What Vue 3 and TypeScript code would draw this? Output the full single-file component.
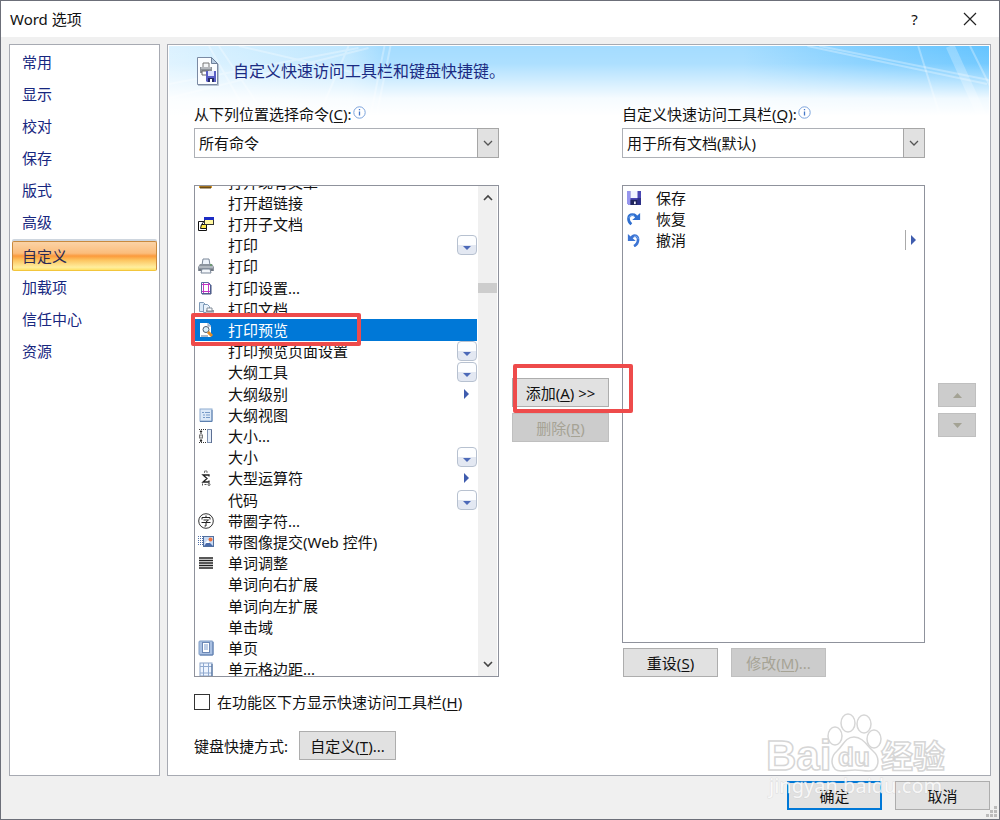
<script setup lang="ts">
import { ref } from 'vue'

type Extra = 'drop' | 'sub' | ''
interface Command {
  label: string
  icon?: string
  extra?: Extra
}

const sections: string[] = ['常用', '显示', '校对', '保存', '版式', '高级', '自定义', '加载项', '信任中心', '资源']
const activeSection = ref('自定义')

const icons: Record<string, string> = {
  folder: '<path d="M1 6h5l1 2h7v6H1z" fill="#d99a2b"/><path d="M2 13.500h11" stroke="#6b4a12" stroke-width="2"/>',
  subdoc:
    '<path d="M.500 5.500h8v9h-8z" fill="#fff" stroke="#111"/><path d="M2.500 12.500l1-4h5v4z" fill="#ffe94a" stroke="#111"/><path d="M4 8l3-4" stroke="#111"/><rect x="6.500" y="1.500" width="9" height="7" fill="#fff7a0" stroke="#333"/><path d="M6 1h10v3H6z" fill="#1c2cc4"/>',
  printer:
    '<path d="M5 1h6l1 6H4z" fill="#eef4fc" stroke="#7b8798"/><path d="M2 6h12l2 3v4H0V9z" fill="#8c949e"/><path d="M1 9h14" stroke="#d5dae0"/><path d="M1 12h14" stroke="#565d66"/><path d="M4 11h8l1 4H3z" fill="#f4f7fb" stroke="#7b8798"/><path d="M12 7h2" stroke="#4f9c49"/>',
  pageSetup:
    '<path d="M3.500 2.500h7l2 2v9h-9z" fill="#fff" stroke="#596aa0"/><path d="M13 5v9H4" fill="none" stroke="#44507c"/><path d="M5.500 3v10M10.500 3v10M4 4.500h8M4 11.500h8" stroke="#c238c4"/>',
  printDoc:
    '<path d="M1.500 1.500h4l2 2v7h-6z" fill="#dbe9f7" stroke="#7f9bb8"/><path d="M5.500 3.500h4l2 2v6h-6z" fill="#eaf3fc" stroke="#7f9bb8"/><path d="M8 9h8v5H8z" fill="#929aa4"/><path d="M9 7h5v3H9z" fill="#fff" stroke="#818b98"/><path d="M8 12h8" stroke="#e6e9ee"/>',
  preview:
    '<path d="M2 1h8l3 3v11H2z" fill="#fff"/><path d="M10 1v3h3" fill="#cbd8eb" stroke="#899cb7"/><circle cx="8" cy="7.500" r="3" fill="#d9effb" stroke="#4d5b6c"/><path d="M10 10l4 4" stroke="#e58d24" stroke-width="3"/><path d="M3 14h7" stroke="#5b708d"/>',
  outline:
    '<rect x="2" y="2" width="12" height="12" fill="#dce9f8" stroke="#8eacd0"/><path d="M14 3v11.500H2" fill="none" stroke="#5c7fae"/><path d="M4 5.500h2M7 5.500h5M5 8h2M8 8h4M5 10.500h2M8 10.500h4" stroke="#789bc8"/>',
  size:
    '<path d="M1 1.500h7M1 14.500h7" stroke="#333" stroke-dasharray="1 1"/><path d="M3 3v3M3 11v3" stroke="#222"/><path d="M1.500 4L3 2l1.500 2zM1.500 12L3 14l1.500-2z" fill="#222"/><rect x="1.500" y="7" width="3" height="3" fill="#ddd" stroke="#777"/><rect x="9.500" y="1.500" width="4" height="13" fill="#e6eef9" stroke="#7d8fae"/><path d="M13.500 2v13" stroke="#5c6f93"/>',
  sigma:
    '<path d="M11 6.500V5H5l4 3.500L5 12h6v-1.500" fill="none" stroke="#222" stroke-width="1.300"/><path d="M6.500 3V1h2.500v2" fill="none" stroke="#777"/><path d="M4.500 13.500v2M6.500 14.500h2" stroke="#555"/><circle cx="11" cy="14.500" r="1" fill="none" stroke="#555"/>',
  circled:
    '<circle cx="8" cy="8" r="7.300" fill="#fff" stroke="#333"/><path d="M8 2.500v2M4 6.500v-2h8v2M5.500 7h5L8 9v4H6.500M3.500 9.500h9" fill="none" stroke="#222"/>',
  image:
    '<path d="M.500 2v9M2.500 2v9M4.500 2v9" stroke="#4f6fa8" stroke-dasharray="1 1"/><rect x="5.500" y="2.500" width="10" height="10" fill="#c8daf4" stroke="#52709f"/><path d="M6 12l4-5 5 5z" fill="#496baa"/><circle cx="12.500" cy="5.500" r="2" fill="#ed7440"/><path d="M7 9l3-3 2 3" fill="#fff"/>',
  justify: '<path d="M1 3h14M1 5.500h14M1 8h14M1 10.500h14M1 13h14" stroke="#222" stroke-width="1.400"/>',
  onePage:
    '<rect x="1" y="1" width="14" height="14" rx="1" fill="#a9c0e2" stroke="#809dc6"/><path d="M15 2v13H2" fill="none" stroke="#5b7bac"/><rect x="4.500" y="2.500" width="7" height="10" fill="#fff" stroke="#6c87b4"/><path d="M6 5h4M6 7h4M6 9h4" stroke="#7d9cce"/>',
  margins:
    '<rect x="2" y="2" width="12" height="13" fill="#eef5ff" stroke="#88a2c8"/><path d="M5.500 2v13M10.500 2v13M2 5.500h12M2 12h12" stroke="#8fa9cf"/><path d="M14 3v12" stroke="#41608f"/>',
  save:
    '<path d="M0 0h16v16H2l-2-2z" fill="#4b48b4"/><path d="M0 0h4v16H2l-2-2z" fill="#9796ee"/><path d="M12 8h4v8h-4z" fill="#2c2f86"/><rect x="4" y="0" width="8" height="8" fill="#f3f5ff"/><rect x="4" y="10" width="8" height="6" fill="#20265c"/><rect x="8" y="12" width="2" height="3" fill="#f4f4ff"/>',
  redo:
    '<path d="M5 14C0 10 1 3 6 3c3 0 5 2 5 5" fill="none" stroke="#2f6fd0" stroke-width="3"/><path d="M6 9h9V1z" fill="#2f6fd0"/><path d="M2 7c1-3 3-4 6-3" fill="none" stroke="#7fb0ee"/>',
  undo:
    '<path d="M8 15c6-3 6-12 1-12C6 3 5 5 4 7" fill="none" stroke="#3c74d4" stroke-width="3"/><path d="M10 9H1V1z" fill="#3c74d4"/><path d="M13 7c-1-3-3-4-5-3" fill="none" stroke="#8cb9f0"/>'
}

const commands: Command[] = [
  { label: '打开现有文章', icon: 'folder' },
  { label: '打开超链接' },
  { label: '打开子文档', icon: 'subdoc' },
  { label: '打印', extra: 'drop' },
  { label: '打印', icon: 'printer' },
  { label: '打印设置...', icon: 'pageSetup' },
  { label: '打印文档', icon: 'printDoc' },
  { label: '打印预览', icon: 'preview' },
  { label: '打印预览页面设置', extra: 'drop' },
  { label: '大纲工具', extra: 'drop' },
  { label: '大纲级别', extra: 'sub' },
  { label: '大纲视图', icon: 'outline' },
  { label: '大小...', icon: 'size' },
  { label: '大小', extra: 'drop' },
  { label: '大型运算符', icon: 'sigma', extra: 'sub' },
  { label: '代码', extra: 'drop' },
  { label: '带圈字符...', icon: 'circled' },
  { label: '带图像提交(Web 控件)', icon: 'image' },
  { label: '单词调整', icon: 'justify' },
  { label: '单词向右扩展' },
  { label: '单词向左扩展' },
  { label: '单击域' },
  { label: '单页', icon: 'onePage' },
  { label: '单元格边距...', icon: 'margins' }
]
const selected = ref(7)

const toolbar: Command[] = [
  { label: '保存', icon: 'save' },
  { label: '恢复', icon: 'redo' },
  { label: '撤消', icon: 'undo', extra: 'sub' }
]
const below = ref(false)
</script>

<template>
  <div class="dialog">
    <header class="titlebar">
      <h1>Word 选项</h1>
      <button class="caption" aria-label="帮助">?</button>
      <button class="caption" aria-label="关闭">
        <svg width="14" height="14" viewBox="0 0 14 14"><path d="M1 1l12 12M13 1L1 13" stroke="#222" stroke-width="1.200" /></svg>
      </button>
    </header>

    <div class="body">
      <nav class="sidebar">
        <button
          v-for="s in sections"
          :key="s"
          class="nav-item"
          :class="{ active: s === activeSection }"
          @click="activeSection = s"
        >
          {{ s }}
        </button>
      </nav>

      <main class="panel">
        <div class="banner">
          <svg class="banner-art" viewBox="0 0 822 70" preserveAspectRatio="none" aria-hidden="true">
            <defs>
              <linearGradient id="sky" x1="0" x2="1" y1="0" y2="0">
                <stop offset="0" stop-color="#dcf2ff" />
                <stop offset="0.220" stop-color="#bfe7ff" />
                <stop offset="0.260" stop-color="#a4dcff" />
                <stop offset="0.700" stop-color="#a4dcff" />
                <stop offset="0.850" stop-color="#80ceff" />
                <stop offset="1" stop-color="#64c4ff" />
              </linearGradient>
              <linearGradient id="fade" x1="0" x2="0" y1="0" y2="1">
                <stop offset="0" stop-color="#fff" stop-opacity="0" />
                <stop offset="0.250" stop-color="#fff" stop-opacity="0.100" />
                <stop offset="0.750" stop-color="#fff" stop-opacity="0.900" />
                <stop offset="1" stop-color="#fff" />
              </linearGradient>
            </defs>
            <rect width="822" height="70" fill="url(#sky)" />
            <g stroke="#fff" fill="none" stroke-opacity="0.300">
              <path d="M40 0l34 60M50 0l40 60M0 38l190-36M0 52l200-50M70 0l130 30M180 0l-30 70M216 0l-14 70M222 0l-14 70" stroke-width="2" />
              <path d="M640 0l180 38M652 0l170 34" stroke-width="2" />
              <path d="M751 0l22 70M803 0l20 40" stroke-width="2" />
              <path d="M783 0l32 70" stroke-width="9" stroke-opacity="0.250" />
            </g>
            <rect width="822" height="70" fill="url(#fade)" />
          </svg>
          <div class="banner-content">
            <svg width="24" height="30" viewBox="0 0 24 30">
              <path d="M1.500 1.500h14l6 6v21h-20z" fill="#fbfdff" stroke="#7b8aa3" />
              <path d="M22.500 8v21.500H2" fill="none" stroke="#b7c3d2" />
              <path d="M15.500 1.500v6h6z" fill="#b9cde3" stroke="#6f819b" />
              <path d="M7 11V7h6v4" fill="#f4f6f8" stroke="#777" />
              <path d="M4 11h12v6H4z" fill="#8d9299" /><path d="M5 12h10" stroke="#dadde1" />
              <path d="M6 15h7v4H6z" fill="#fff" stroke="#666" />
              <path d="M10 15h10v11H11l-1-1z" fill="#5a5fc5" /><path d="M12 15h6v5h-6z" fill="#dfe4ff" /><path d="M12 22h6v4h-6z" fill="#252b68" /><path d="M14 23h2v3h-2z" fill="#fff" />
            </svg>
            <h2>自定义快速访问工具栏和键盘快捷键。</h2>
          </div>
        </div>

        <div class="columns">
          <div class="label from-label">
            <label for="from">从下列位置选择命令(<u>C</u>):</label>
            <svg class="info" width="13" height="13" viewBox="0 0 13 13"><circle cx="6.500" cy="6.500" r="5.700" fill="#fff" stroke="#7ba3dc" /><path d="M6.500 5.500v4M6.500 3v1.300" stroke="#4678c8" stroke-width="1.300" /></svg>
          </div>
          <div class="combo from-combo">
            <select id="from"><option>所有命令</option></select>
            <span class="combo-arrow"><svg width="10" height="7" viewBox="0 0 10 7"><path d="M1 1l4 4 4-4" fill="none" stroke="#555" stroke-width="1.300" /></svg></span>
          </div>

          <div class="list-wrap">
            <div class="list source">
              <ul class="rows" role="listbox" aria-label="命令">
                <li
                  v-for="(c, i) in commands"
                  :key="i"
                  role="option"
                  class="row"
                  :class="{ selected: i === selected }"
                  :aria-selected="i === selected"
                  @click="selected = i"
                >
                  <svg class="glyph" viewBox="0 0 16 16" v-html="c.icon ? icons[c.icon] : ''"></svg>
                  <span class="text">{{ c.label }}</span>
                  <span v-if="c.extra === 'drop'" class="drop"><svg width="8" height="4" viewBox="0 0 8 4"><path d="M0 0h8L4 4z" fill="#4c69b8" /></svg></span>
                  <span v-if="c.extra === 'sub'" class="sub"><svg width="5" height="10" viewBox="0 0 5 10"><path d="M0 0l5 5-5 5z" fill="#3f5cae" /></svg></span>
                </li>
              </ul>
              <div class="scrollbar">
                <svg width="10" height="7" viewBox="0 0 10 7"><path d="M1 6l4-4 4 4" fill="none" stroke="#444" stroke-width="1.600" /></svg>
                <span class="thumb"></span>
                <svg width="10" height="7" viewBox="0 0 10 7"><path d="M1 1l4 4 4-4" fill="none" stroke="#444" stroke-width="1.600" /></svg>
              </div>
            </div>
            <span class="mark mark-row"></span>
          </div>

          <div class="transfer">
            <button class="btn">添加(<u>A</u>) &gt;&gt;</button>
            <button class="btn" disabled>删除(<u>R</u>)</button>
            <span class="mark mark-add"></span>
          </div>

          <div class="label to-label">
            <label for="to">自定义快速访问工具栏(<u>Q</u>):</label>
            <svg class="info" width="13" height="13" viewBox="0 0 13 13"><circle cx="6.500" cy="6.500" r="5.700" fill="#fff" stroke="#7ba3dc" /><path d="M6.500 5.500v4M6.500 3v1.300" stroke="#4678c8" stroke-width="1.300" /></svg>
          </div>
          <div class="combo to-combo">
            <select id="to"><option>用于所有文档(默认)</option></select>
            <span class="combo-arrow"><svg width="10" height="7" viewBox="0 0 10 7"><path d="M1 1l4 4 4-4" fill="none" stroke="#555" stroke-width="1.300" /></svg></span>
          </div>
          <div class="target-wrap">
            <ul class="list target" role="listbox" aria-label="快速访问工具栏">
              <li v-for="c in toolbar" :key="c.label" role="option" class="row">
                <svg class="glyph" viewBox="0 0 16 16" v-html="icons[c.icon ?? '']"></svg>
                <span class="text">{{ c.label }}</span>
                <span v-if="c.extra" class="sub split"><svg width="5" height="10" viewBox="0 0 5 10"><path d="M0 0l5 5-5 5z" fill="#3f5cae" /></svg></span>
              </li>
            </ul>
            <div class="target-actions">
              <button class="btn">重设(<u>S</u>)</button>
              <button class="btn" disabled>修改(<u>M</u>)...</button>
            </div>
          </div>

          <div class="order">
            <button class="btn small" disabled aria-label="上移"><svg width="9" height="5" viewBox="0 0 9 5"><path d="M0 5h9L4.500 0z" fill="#a3a294" /></svg></button>
            <button class="btn small" disabled aria-label="下移"><svg width="9" height="5" viewBox="0 0 9 5"><path d="M0 0h9L4.500 5z" fill="#a3a294" /></svg></button>
          </div>
        </div>

        <label class="check"><input v-model="below" type="checkbox" /><span>在功能区下方显示快速访问工具栏(<u>H</u>)</span></label>
        <div class="keys">
          <span>键盘快捷方式:</span>
          <button class="btn">自定义(<u>T</u>)...</button>
        </div>
      </main>
    </div>

    <footer class="footer">
      <button class="btn primary">确定</button>
      <button class="btn">取消</button>
      <svg class="grip" width="12" height="12" viewBox="0 0 12 12"><path d="M8 0h3v3H8zM4 4h3v3H4zM8 4h3v3H8zM0 8h3v3H0zM4 8h3v3H4zM8 8h3v3H8z" fill="#bcbcbc" /></svg>
    </footer>

    <svg class="watermark" width="184" height="94" viewBox="0 0 184 94" aria-hidden="true">
      <g fill="#fff" fill-opacity="0.850" stroke="#d6d6d6" stroke-width="1.500">
        <text x="-2" y="57" class="wm-latin">Bai</text>
        <ellipse cx="67" cy="23" rx="7" ry="9" />
        <ellipse cx="80" cy="10" rx="7" ry="9" />
        <ellipse cx="96" cy="11" rx="7" ry="9" />
        <ellipse cx="106" cy="26" rx="7" ry="9" />
        <path d="M86 24c-9 0-11 9-17 14-8 7-6 20 4 20 6 0 8-1 14-1s8 1 14 1c10 0 12-13 4-20-6-5-10-14-19-14z" />
        <text x="70" y="53" class="wm-du">du</text>
        <text x="113" y="55" class="wm-cjk">经验</text>
      </g>
      <text x="1" y="80" class="wm-url">jingyan.baidu.com</text>
    </svg>
  </div>
</template>

<style>
body {
  margin: 0;
}
</style>

<style scoped>
.dialog {
  position: relative;
  box-sizing: border-box;
  min-height: 100vh;
  display: flex;
  flex-direction: column;
  border: 1px solid #6c6f79;
  background: #f0f0f0;
  color: #111;
  font-family: 'Noto Sans', 'Noto Sans CJK SC', sans-serif;
  font-size: 15px;
  line-height: 20px;
}
.dialog * {
  box-sizing: border-box;
}
h1,
h2,
ul {
  margin: 0;
  padding: 0;
  font-weight: normal;
}
button,
select {
  font: inherit;
  color: inherit;
}
svg {
  display: block;
  flex: none;
}
u {
  text-underline-offset: 2px;
}
.titlebar {
  display: flex;
  align-items: center;
  height: 36px;
  padding: 0 2px 0 9px;
  background: #fff;
}
.titlebar h1 {
  flex: 1;
  font-size: 15px;
}
.caption {
  display: flex;
  align-items: center;
  justify-content: center;
  width: 55px;
  height: 34px;
  padding: 0;
  border: 0;
  background: none;
}
.body {
  flex: 1;
  display: flex;
  gap: 7px;
  padding: 7px 8px 0;
}
.sidebar,
.panel {
  border: 1px solid #a7aab2;
  background: #fff;
}
.sidebar {
  flex: none;
  width: 151px;
  padding: 1px 2px;
}
.nav-item {
  display: block;
  width: 100%;
  height: 32px;
  padding: 0 10px;
  border: 0;
  background: none;
  color: #17277f;
  text-align: left;
}
.nav-item.active {
  height: 30px;
  margin: 3px 0 0;
  border: 1px solid #c98a3e;
  border-bottom-color: #f3c63c;
  border-radius: 2px;
  padding: 0 9px;
  background: linear-gradient(#fbd3a6, #fbbd7c 40%, #fb9a3c 50%, #fdc561 65%, #ffee9e 90%, #ffe166);
  box-shadow: 0 -2px 0 #ced6df;
  color: #2b2a55;
}
.panel {
  flex: 1;
  min-width: 0;
  display: flex;
  flex-direction: column;
  padding: 1px;
}
.banner {
  display: grid;
  height: 58px;
}
.banner-art,
.banner-content {
  grid-area: 1 / 1;
}
.banner-art {
  width: 100%;
  height: 70px;
}
.banner-content {
  z-index: 1;
  display: flex;
  align-items: center;
  gap: 13px;
  height: 50px;
  padding-left: 27px;
}
.banner h2 {
  color: #1b2b83;
  font-size: 16px;
}
.columns {
  z-index: 1;
  flex: 1;
  display: grid;
  grid-template-columns: 305fr 97px 303fr 38px;
  grid-template-rows: 20px 30px 1fr;
  column-gap: 13px;
  padding: 0 13px 0 25px;
}
.label {
  display: flex;
  gap: 1px;
  white-space: nowrap;
}
.info {
  margin-top: 2px;
}
.from-label {
  grid-area: 1 / 1;
}
.to-label {
  grid-area: 1 / 3;
}
.from-combo {
  grid-area: 2 / 1;
}
.to-combo {
  grid-area: 2 / 3;
}
.combo {
  display: grid;
  margin-top: 4px;
  height: 30px;
}
.combo > * {
  grid-area: 1 / 1;
}
.combo select {
  appearance: none;
  border: 1px solid #adb0b6;
  border-radius: 0;
  background: #fff;
  padding: 0 24px 0 4px;
}
.combo-arrow {
  justify-self: end;
  display: flex;
  align-items: center;
  justify-content: center;
  width: 22px;
  border: 1px solid #a6a6a6;
  background: #e1e1e1;
  pointer-events: none;
}
.list-wrap {
  position: relative;
  grid-area: 3 / 1;
  margin-top: 31px;
  display: flex;
}
.list {
  border: 1px solid #8f929c;
  background: #fff;
  list-style: none;
}
.source {
  flex: 1;
  display: flex;
  overflow: hidden;
  padding-right: 1px;
}
.rows {
  flex: 1;
  display: flex;
  flex-direction: column;
  margin: -15px 0 -4px;
  list-style: none;
}
.row {
  flex: 1;
  display: flex;
  align-items: center;
  padding-left: 3px;
  white-space: nowrap;
}
.row.selected {
  background: #0078d7;
  color: #fff;
}
.glyph {
  width: 16px;
  height: 16px;
  margin-right: 14px;
}
.text {
  flex: 1;
}
.drop {
  display: flex;
  align-items: flex-end;
  justify-content: center;
  width: 20px;
  height: 20px;
  padding-bottom: 4px;
  border: 1px solid #b7c1d0;
  border-radius: 4px;
  background: linear-gradient(#fdfeff 50%, #e3e8f2 51%);
}
.sub {
  display: flex;
  align-items: center;
  width: 13px;
  height: 20px;
}
.scrollbar {
  display: flex;
  flex-direction: column;
  align-items: center;
  width: 19px;
  margin-left: 1px;
  padding: 8px 0;
  background: #f0f0f0;
}
.thumb {
  width: 100%;
  height: 10px;
  margin: 82px 0 auto;
  background: #cdcdcd;
}
.mark {
  position: absolute;
  border: 4px solid #ee4b4b;
  border-radius: 2px;
  pointer-events: none;
  z-index: 2;
}
.mark-row {
  left: -3px;
  top: 128px;
  width: 170px;
  height: 33px;
}
.mark-add {
  left: 1px;
  top: -14px;
  width: 120px;
  height: 49px;
}
.transfer {
  position: relative;
  grid-area: 3 / 2;
  align-self: start;
  display: grid;
  gap: 6px;
  margin-top: 224px;
}
.btn {
  height: 29px;
  min-width: 95px;
  padding: 0 6px;
  border: 1px solid #adadad;
  background: #e1e1e1;
  white-space: nowrap;
}
.btn:disabled {
  border-color: #bfbfbf;
  background: #ccc;
  color: #a6a395;
}
.btn.small {
  display: flex;
  align-items: center;
  justify-content: center;
  min-width: 38px;
  height: 24px;
}
.btn.primary {
  border: 2px solid #0078d7;
}
.target-wrap {
  grid-area: 3 / 3;
  display: flex;
  flex-direction: column;
  gap: 5px;
  margin-top: 31px;
}
.target {
  flex: 1;
  padding-top: 1px;
}
.target .row {
  height: 21px;
}
.target .glyph {
  width: 14px;
  height: 14px;
  margin: 0 15px 0 1px;
}
.split {
  width: 19px;
  padding-left: 5px;
  border-left: 1px solid #aaa;
}
.target-actions {
  display: flex;
  gap: 13px;
  padding-left: 1px;
}
.order {
  grid-area: 3 / 4;
  align-self: start;
  display: grid;
  gap: 6px;
  margin-top: 229px;
}
.check {
  display: flex;
  align-items: center;
  gap: 7px;
  margin: 15px 25px 0;
}
.check input {
  appearance: none;
  width: 16px;
  height: 16px;
  margin: 0;
  border: 1px solid #333;
  background: #fff;
}
.check input:checked {
  background: #0078d7;
}
.keys {
  display: grid;
  grid-template-columns: 105px 97px;
  align-items: center;
  margin: 19px 25px 14px;
}
.footer {
  display: flex;
  justify-content: flex-end;
  gap: 13px;
  height: 43px;
  padding: 5px 9px 0;
}
.grip {
  position: absolute;
  right: 1px;
  bottom: 1px;
}
.watermark {
  position: absolute;
  right: 47px;
  bottom: 12px;
  z-index: 3;
  overflow: visible;
  pointer-events: none;
}
.wm-latin {
  font: bold 42px 'Liberation Sans', sans-serif;
}
.wm-du {
  font: bold 26px 'Liberation Sans', sans-serif;
}
.wm-cjk {
  font: bold 32px 'Noto Sans CJK SC', sans-serif;
}
.wm-url {
  font: 20px 'Noto Sans', sans-serif;
  fill: #fff;
  fill-opacity: 0.8;
  stroke: #ccc;
  stroke-opacity: 0.5;
  paint-order: stroke;
}
</style>
